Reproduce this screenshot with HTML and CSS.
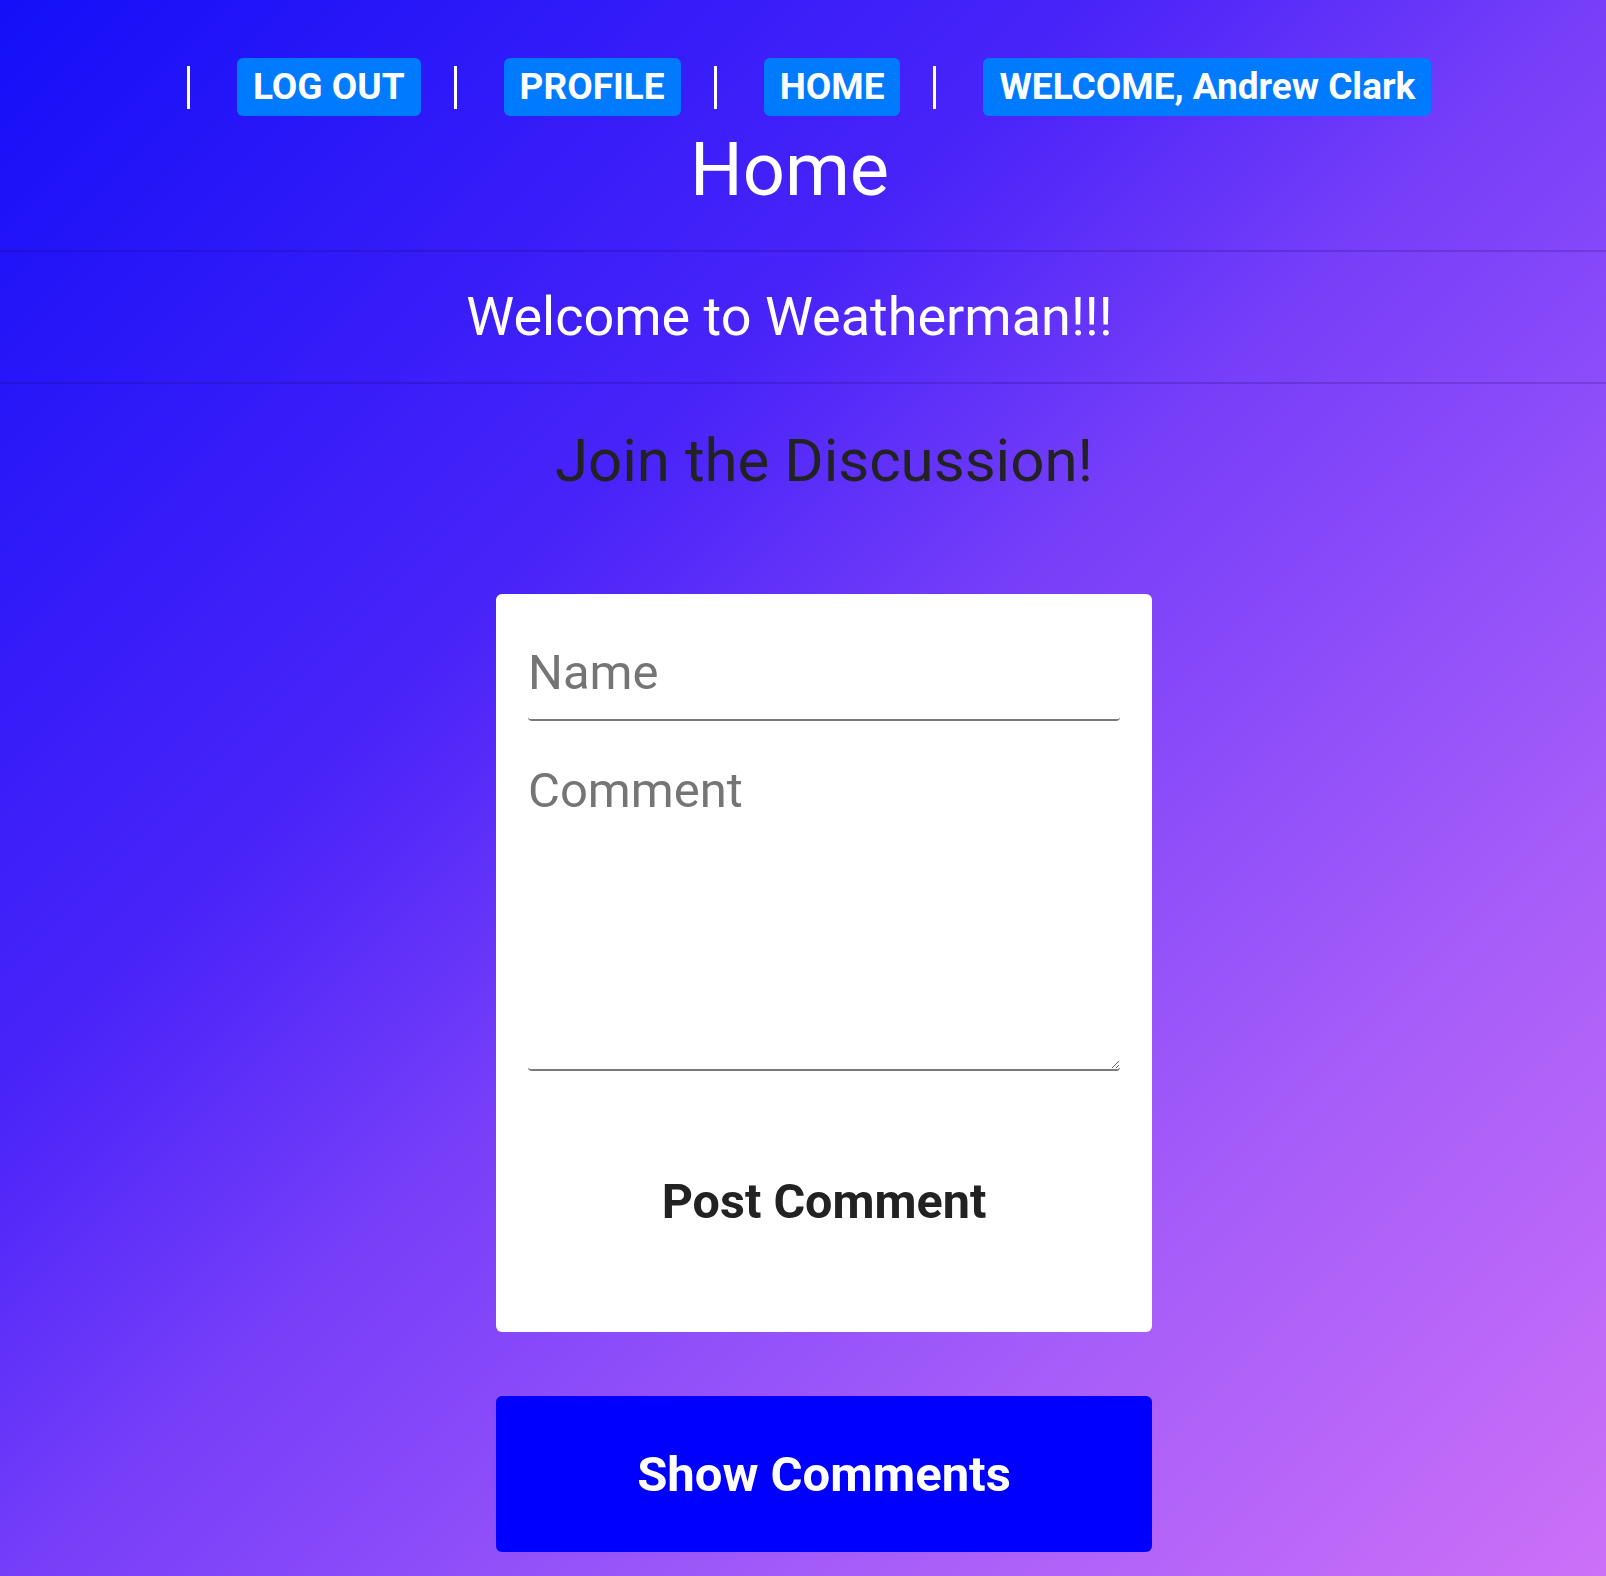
FILE: index.html
```html
<!DOCTYPE html>
<html lang="en">
<head>
<meta charset="utf-8">
<title>Weatherman - Home</title>
<link rel="stylesheet" href="styles.css">
</head>
<body>
  <nav class="topnav">
    <span class="sep" aria-hidden="true"></span>
    <a class="navbtn" href="#">LOG OUT</a>
    <span class="sep" aria-hidden="true"></span>
    <a class="navbtn" href="#">PROFILE</a>
    <span class="sep" aria-hidden="true"></span>
    <a class="navbtn" href="#">HOME</a>
    <span class="sep" aria-hidden="true"></span>
    <a class="navbtn" href="#">WELCOME, Andrew Clark</a>
  </nav>
  <header class="page-head">
    <h1 class="page-title">Home</h1>
  </header>
  <hr class="rule">
  <p class="welcome">Welcome to Weatherman!!!</p>
  <hr class="rule">
  <main class="discussion">
    <h2 class="join">Join the Discussion!</h2>
    <form class="card">
      <input class="field" type="text" placeholder="Name">
      <textarea class="area" placeholder="Comment"></textarea>
      <button class="post" type="button">Post Comment</button>
    </form>
    <button class="show" type="button">Show Comments</button>
  </main>
</body>
</html>
```

FILE: styles.css
```css
html, body {
  margin: 0;
  padding: 0;
}

body {
  min-height: 1576px;
  font-family: "Roboto", "Noto Sans", sans-serif;
  color: #fff;
  background: linear-gradient(135deg, #140ff8 0%, #4a24f9 35%, #763ef9 50%, #a45cf9 75%, #cc70f8 100%);
}

.topnav {
  display: flex;
  align-items: center;
  padding: 58px 0 0 187px;
  height: 58px;
}

.sep {
  display: block;
  width: 3px;
  height: 43px;
  background: #fff;
  margin-right: 47px;
}

.navbtn {
  display: block;
  background: #007bff;
  color: #fff;
  text-decoration: none;
  font-family: "Roboto", sans-serif;
  font-weight: 700;
  font-size: 37px;
  line-height: 58px;
  height: 58px;
  padding: 0 16px;
  border-radius: 6px;
  margin-right: 33px;
  white-space: nowrap;
}

.page-head {
  padding-right: 27px;
  text-align: center;
}

.page-title {
  margin: 16.7px 0 0;
  font-size: 74px;
  font-weight: 400;
  line-height: 1;
}

.rule {
  margin: 43px 0 0;
  height: 0;
  border: 0;
  border-top: 2px solid rgba(20, 0, 80, 0.18);
}

.welcome {
  margin: 38px 0 38.6px;
  padding-right: 27px;
  text-align: center;
  font-size: 54px;
  line-height: 1;
}

.welcome + .rule {
  margin-top: 0;
}

.discussion {
  display: flex;
  flex-direction: column;
  align-items: center;
  padding-left: 42px;
}

.join {
  margin: 46.5px 0 0;
  font-size: 60px;
  font-weight: 400;
  line-height: 1;
  color: #222;
}

.card {
  box-sizing: border-box;
  width: 656px;
  margin-top: 103.5px;
  padding: 32px 32px 32px;
  background: #fff;
  border-radius: 6px;
}

.field,
.area {
  display: block;
  box-sizing: border-box;
  width: 100%;
  margin: 0;
  border: 0;
  border-bottom: 2px solid #7a7a7a;
  border-radius: 4px;
  background: transparent;
  font-family: "Roboto", sans-serif;
  font-size: 49px;
  color: #333;
  outline: none;
  padding: 0;
}

.field {
  height: 95px;
}

.area {
  height: 350px;
  padding-top: 44.5px;
  line-height: 1;
}

.field::placeholder,
.area::placeholder {
  color: #757575;
  opacity: 1;
}

.post {
  display: block;
  width: 100%;
  height: 196.5px;
  margin-top: 32px;
  border: 0;
  background: transparent;
  font-family: "Roboto", sans-serif;
  font-weight: 700;
  font-size: 48.5px;
  color: #222;
  cursor: pointer;
}

.show {
  display: block;
  width: 656px;
  height: 156px;
  margin-top: 64.5px;
  border: 0;
  border-radius: 6px;
  background: #0000ff;
  color: #fff;
  font-family: "Roboto", sans-serif;
  font-weight: 700;
  font-size: 49px;
  cursor: pointer;
}
```
